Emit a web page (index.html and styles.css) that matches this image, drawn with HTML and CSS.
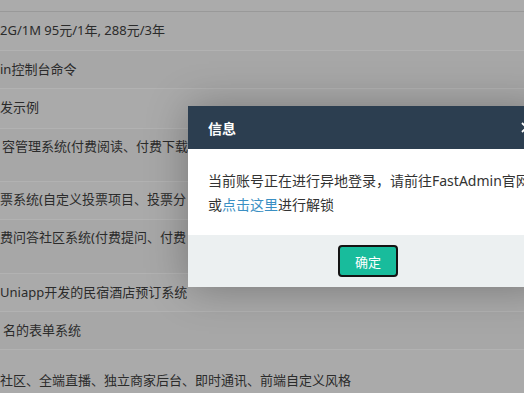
FILE: index.html
```html
<!DOCTYPE html>
<html lang="zh-CN">
<head>
<meta charset="utf-8">
<title>信息</title>
<link rel="stylesheet" href="styles.css">
</head>
<body>
<div class="page">
  <div class="top"></div>
  <div class="table">
    <div class="row h38"><span class="t">2G/1M 95元/1年, 288元/3年</span></div>
    <div class="row alt h37"><span class="t">in控制台命令</span></div>
    <div class="row h39"><span class="t">发示例</span></div>
    <div class="row alt h52 p7"><span class="t in2">容管理系统(付费阅读、付费下载</span></div>
    <div class="row h37 p7"><span class="t">票系统(自定义投票项目、投票分</span></div>
    <div class="row alt h53 p7"><span class="t">费问答社区系统(付费提问、付费</span></div>
    <div class="row h37"><span class="t">Uniapp开发的民宿酒店预订系统</span></div>
    <div class="row alt h38"><span class="t in3">名的表单系统</span></div>
    <div class="row h60 p20"><span class="t">社区、全端直播、独立商家后台、即时通讯、前端自定义风格</span></div>
  </div>
</div>

<div class="dialog">
  <div class="dlg-head">
    <span class="dlg-title">信息</span>
    <span class="dlg-close"><svg width="11" height="11" viewBox="0 0 11 11"><path d="M1 1L10 10M10 1L1 10" stroke="#fff" stroke-width="1.8" fill="none"/></svg></span>
  </div>
  <div class="dlg-body">
    <div class="line">当前账号正在进行异地登录，请前往FastAdmin官网进行解锁</div>
    <div class="line">或<a class="link" href="#">点击这里</a>进行解锁</div>
  </div>
  <div class="dlg-foot">
    <button class="btn-ok" type="button">确定</button>
  </div>
</div>
</body>
</html>
```

FILE: styles.css
```css
html, body {
  margin: 0;
  padding: 0;
  width: 524px;
  height: 393px;
  overflow: hidden;
}
body {
  background: #aaaaaa;
  font-family: "Noto Sans", "Noto Sans CJK SC", sans-serif;
  position: relative;
}
.page {
  width: 524px;
}
.top {
  height: 11px;
  background: #ababab;
  border-bottom: 1px solid #999999;
}
.table {
  display: flex;
  flex-direction: column;
}
.row {
  box-sizing: border-box;
  border-top: 1px solid #b2b2b2;
  background: #aaaaaa;
  padding-top: 8px;
  font-size: 13px;
  line-height: 20px;
  color: #2b2b2b;
  white-space: nowrap;
  overflow: hidden;
}
.table .row:first-child { border-top: none; }
.row.alt { background: #a7a7a7; }
.h37 { height: 38px; }
.h38 { height: 38px; }
.h39 { height: 40px; }
.h52 { height: 53px; }
.h53 { height: 54px; }
.h60 { height: 60px; }
.p7 { padding-top: 7px; }
.p20 { padding-top: 20px; }
.t { display: inline-block; }
.in2 { margin-left: 2px; }
.in3 { margin-left: 3px; }

.dialog {
  position: absolute;
  left: 188px;
  top: 106px;
  width: 360px;
  background: #ffffff;
  box-shadow: 1px 1px 40px rgba(0, 0, 0, 0.3);
  overflow: hidden;
}
.dlg-head {
  height: 43px;
  background: #2c3e50;
  display: flex;
  align-items: center;
  justify-content: space-between;
  padding: 0 16px 0 20px;
}
.dlg-title {
  color: #ffffff;
  font-size: 14px;
  font-weight: bold;
}
.dlg-close {
  display: flex;
  width: 11px;
  height: 11px;
}
.dlg-body {
  padding: 20px 20px 18px;
  font-size: 14px;
  line-height: 24px;
  color: #333333;
  height: 48px;
}
.line {
  white-space: nowrap;
}
.link {
  color: #3a8fc3;
  text-decoration: none;
}
.dlg-foot {
  background: #ecf0f1;
  padding: 10px 0;
  display: flex;
  justify-content: center;
}
.btn-ok {
  width: 60px;
  height: 32px;
  box-sizing: border-box;
  border: 2px solid #141414;
  border-radius: 4px;
  background: #18bc9c;
  color: #ffffff;
  font-family: "Noto Sans CJK SC", sans-serif;
  font-size: 13px;
  padding: 0;
}
```
